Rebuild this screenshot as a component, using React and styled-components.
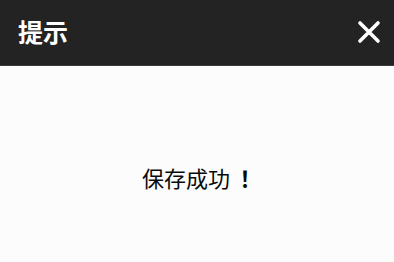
import React from "react";
import styled, { createGlobalStyle } from "styled-components";

const GlobalStyle = createGlobalStyle`
  html, body {
    margin: 0;
    padding: 0;
    background: #fcfcfd;
  }
  body {
    font-family: "Noto Sans CJK SC", "Noto Sans", sans-serif;
  }
`;

export default function App() {
  return (
    <>
      <GlobalStyle />
      <DialogStyled>
        <div className="header">
          <h1 className="title">提示</h1>
          <button className="close" aria-label="close">
            <svg width="24" height="24" viewBox="0 0 24 24">
              <path
                d="M3 3 L21 21 M21 3 L3 21"
                stroke="#ffffff"
                strokeWidth="3.6"
                strokeLinecap="round"
              />
            </svg>
          </button>
        </div>
        <div className="body">
          <p className="message">
            保存成功<span className="punct">！</span>
          </p>
        </div>
      </DialogStyled>
    </>
  );
}

const DialogStyled = styled.div`
  width: 394px;
  height: 262px;
  display: flex;
  flex-direction: column;

  .header {
    height: 66px;
    background: #232323;
    display: flex;
    align-items: center;
    justify-content: space-between;
    padding: 0 10px 0 18px;
    box-sizing: border-box;
    border-bottom: 1px solid #3a3a3a;
  }
  .title {
    margin: 0;
    color: #ffffff;
    font-size: 25px;
    font-weight: 700;
    line-height: 1;
    margin-top: -2px;
  }
  .close {
    background: none;
    border: none;
    padding: 0;
    width: 30px;
    height: 30px;
    display: flex;
    align-items: center;
    justify-content: center;
    margin-top: -1px;
  }
  .body {
    flex: 1;
    display: flex;
    align-items: center;
    justify-content: center;
    background: #fcfcfd;
    padding-top: 26px;
  }
  .message {
    margin: 0 0 0 4px;
    color: #0a0a0a;
    font-size: 22px;
    font-weight: 400;
    line-height: 1;
    text-spacing-trim: space-all;
  }
  .punct {
    font-family: "Noto Sans CJK TC", "Noto Sans CJK SC", sans-serif;
    font-weight: 700;
    margin-left: 4px;
  }
`;
